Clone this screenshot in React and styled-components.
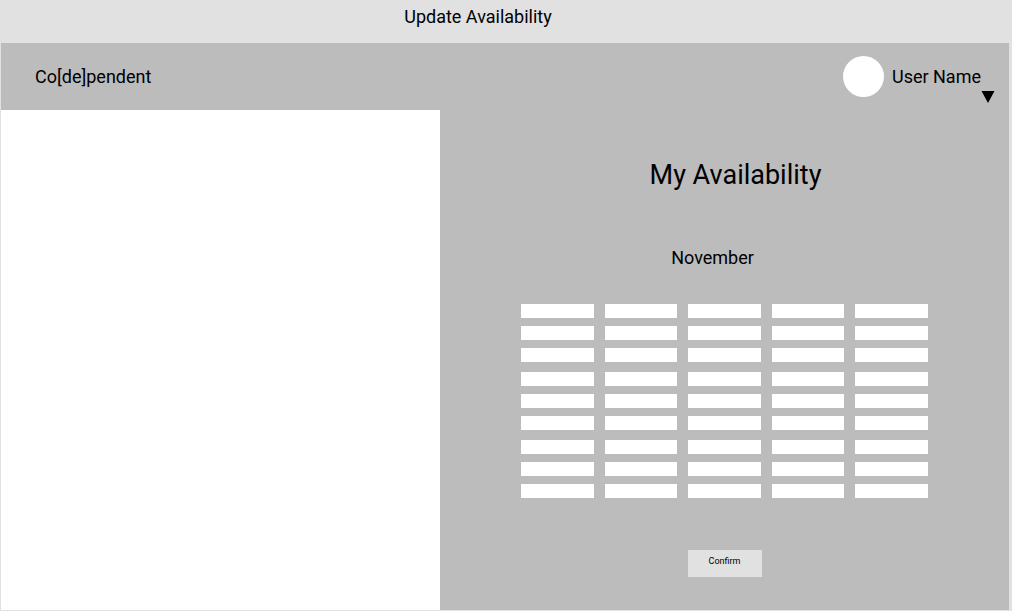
import React from "react";
import styled, { createGlobalStyle } from "styled-components";

const GlobalStyle = createGlobalStyle`
  *, *::before, *::after { box-sizing: border-box; }
  body {
    margin: 0;
    background: #e1e1e1;
    color: #000;
    font-family: Roboto, "Liberation Sans", sans-serif;
    font-size: 18px;
    line-height: 22px;
  }
  button {
    margin: 0;
    padding: 0;
    border: 0;
    color: inherit;
    font: inherit;
    cursor: pointer;
  }
`;

const Page = styled.div`
  display: flex;
  flex-direction: column;
  min-height: 100vh;
  padding: 0 3px 1px 1px;
`;

const PageTitle = styled.h1`
  height: 43px;
  margin: 0;
  padding: 6px 54px 0 0;
  font-size: 18px;
  font-weight: 400;
  text-align: center;
`;

const TopBar = styled.header`
  display: flex;
  align-items: center;
  justify-content: space-between;
  height: 67px;
  padding: 0 14px 0 34px;
  background: #bcbcbc;
`;

const Brand = styled.a`
  color: inherit;
  text-decoration: none;
`;

const UserMenu = styled.button`
  display: flex;
  align-items: center;
  background: none;
`;

const Avatar = styled.span`
  width: 41px;
  height: 41px;
  margin-right: 8px;
  border-radius: 50%;
  background: #fff;
`;

const Caret = styled.svg`
  align-self: flex-end;
  width: 14px;
  height: 12px;
  margin-bottom: -6px;
`;

const Content = styled.main`
  display: grid;
  flex: 1;
  grid-template-columns: 439fr 569fr;
  background: #bcbcbc;
`;

const SidePanel = styled.aside`
  background: #fff;
`;

const Availability = styled.form`
  display: flex;
  flex-direction: column;
  align-items: center;
  padding: 49px 24px 33px;
`;

const Heading = styled.h2`
  margin: 0;
  padding-left: 22px;
  font-size: 27px;
  font-weight: 400;
  line-height: 32px;
`;

const Month = styled.h3`
  margin: 56px 0 35px;
  padding-right: 24px;
  font-size: 18px;
  font-weight: 400;
`;

const Calendar = styled.div`
  display: grid;
  gap: 10px;
  width: 100%;
  max-width: 407px;
`;

const Week = styled.div`
  display: grid;
  grid-template-columns: repeat(5, 1fr);
  gap: 8px 11px;
`;

const Slot = styled.button`
  height: 14px;
  background: #fff;
`;

const Confirm = styled.button`
  width: 74px;
  height: 27px;
  margin-top: 52px;
  padding-bottom: 6px;
  background: #e1e1e1;
  font-size: 9px;
  line-height: 12px;
`;

const WEEKS = [1, 2, 3];
const SLOTS = Array.from({ length: 15 }, (_, i) => i + 1);

export default function App() {
  return (
    <>
      <GlobalStyle />
      <Page>
        <PageTitle>Update Availability</PageTitle>
        <TopBar>
          <Brand href="#">Co[de]pendent</Brand>
          <UserMenu type="button">
            <Avatar />
            User Name
            <Caret viewBox="0 0 14 12" aria-hidden="true">
              <path d="M0.5 0H13.5L7 12Z" />
            </Caret>
          </UserMenu>
        </TopBar>
        <Content>
          <SidePanel />
          <Availability>
            <Heading>My Availability</Heading>
            <Month>November</Month>
            <Calendar>
              {WEEKS.map((week) => (
                <Week key={week}>
                  {SLOTS.map((slot) => (
                    <Slot
                      key={slot}
                      type="button"
                      aria-label={`Week ${week}, slot ${slot}`}
                    />
                  ))}
                </Week>
              ))}
            </Calendar>
            <Confirm type="button">Confirm</Confirm>
          </Availability>
        </Content>
      </Page>
    </>
  );
}
